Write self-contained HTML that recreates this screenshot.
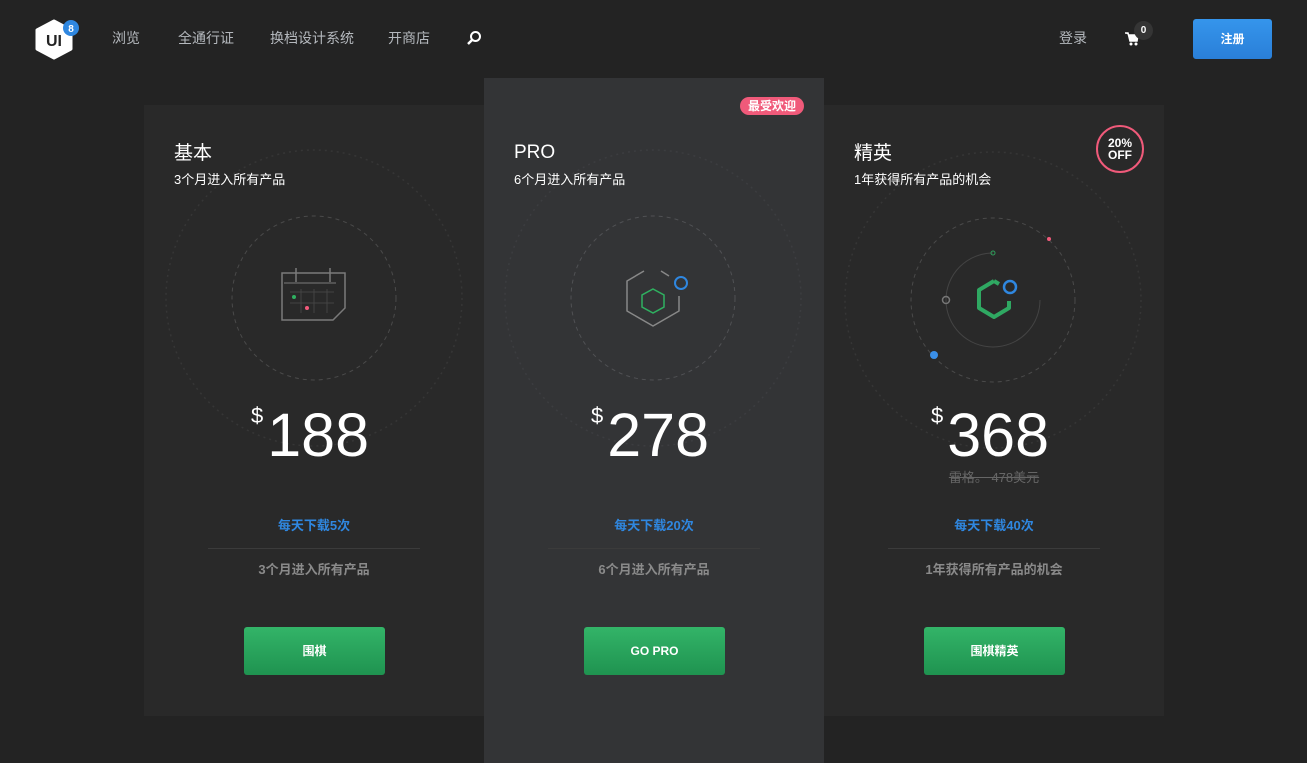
<!DOCTYPE html>
<html><head><meta charset="utf-8"><style>
*{margin:0;padding:0;box-sizing:border-box}
body{width:1307px;height:763px;background:#232323;font-family:"Liberation Sans","Noto Sans CJK SC",sans-serif;position:relative;overflow:hidden;color:#fff}
.nav{position:absolute;top:28px;font-size:14px;color:#b4b8bd}
.card{position:absolute;width:340px;background:#292929}
.abs{position:absolute}
.t1{position:absolute;left:30px;top:33px;font-size:19px;color:#fff}
.t2{position:absolute;left:30px;top:64px;font-size:13px;color:#fff}
.price{position:absolute;left:0;width:340px;padding-right:8px;text-align:center;font-size:61px;line-height:61px;color:#fff;font-family:"Liberation Sans",sans-serif}
.price sup{font-size:22px;line-height:22px;vertical-align:top;position:relative;top:0px;margin-right:4px}
.dl{position:absolute;left:0;width:340px;text-align:center;font-size:13px;font-weight:bold;color:#2f87e0}
.hr{position:absolute;left:64px;width:212px;height:1px;background:#3b3b3b}
.desc{position:absolute;left:0;width:340px;text-align:center;font-size:13px;font-weight:bold;color:#8a8a8a}
.btn{position:absolute;left:100px;width:141px;height:48px;border-radius:3px;background:linear-gradient(#33b468,#1f9350);text-align:center;line-height:48px;font-size:12px;font-weight:bold;color:#fff}
</style></head><body>
<svg class="abs" style="left:34px;top:18px" width="46" height="42" viewBox="0 0 46 42">
<polygon points="20,3 37,12 37,31 20,40 3,31 3,12" fill="#fff" stroke="#fff" stroke-width="3" stroke-linejoin="round"/>
<text x="20" y="28" text-anchor="middle" font-family="Liberation Sans" font-weight="bold" font-size="16" fill="#232323">UI</text>
<circle cx="37" cy="10" r="8" fill="#2f87e0"/>
<text x="37" y="14" text-anchor="middle" font-family="Liberation Sans" font-weight="bold" font-size="10" fill="#fff">8</text>
</svg>
<div class="nav" style="left:112px">浏览</div>
<div class="nav" style="left:178px">全通行证</div>
<div class="nav" style="left:270px">换档设计系统</div>
<div class="nav" style="left:388px">开商店</div>
<svg class="abs" style="left:466px;top:30px" width="16" height="16" viewBox="0 0 16 16"><circle cx="9.5" cy="6.5" r="4.5" stroke="#fff" stroke-width="2" fill="none"/><line x1="6" y1="10" x2="2" y2="14" stroke="#fff" stroke-width="2.5"/></svg>
<div class="nav" style="left:1059px">登录</div>
<svg class="abs" style="left:1124px;top:31px" width="16" height="16" viewBox="0 0 16 16"><path d="M1 2h3l2 8h7l1-6H5" fill="#fff" stroke="#fff" stroke-width="1.5"/><circle cx="7" cy="13" r="1.5" fill="#fff"/><circle cx="12" cy="13" r="1.5" fill="#fff"/></svg>
<div class="abs" style="left:1134px;top:21px;width:19px;height:19px;border-radius:50%;background:#353535;font-size:10px;font-weight:bold;text-align:center;line-height:19px">0</div>
<div class="abs" style="left:1193px;top:19px;width:79px;height:40px;border-radius:3px;background:linear-gradient(#3595ec,#2a7fd8);font-size:12px;font-weight:bold;text-align:center;line-height:40px">注册</div>

<!-- left -->
<div class="card" style="left:144px;top:105px;height:611px">
<svg class="abs" style="left:0;top:0" width="340" height="360"><circle cx="170" cy="193" r="148" fill="none" stroke="#363636" stroke-width="1.5" stroke-dasharray="2 4"/><circle cx="170" cy="193" r="82" fill="none" stroke="#4a4a4a" stroke-dasharray="4 4"/>
<g stroke="#7a7a7a" stroke-width="1.5" fill="none"><path d="M138 178V168h63v35l-12 12h-51V175"/><line x1="140" y1="178" x2="192" y2="178" stroke-width="1"/><line x1="152" y1="163" x2="152" y2="177"/><line x1="186" y1="163" x2="186" y2="177"/></g>
<g stroke="#444" stroke-width="1"><line x1="146" y1="187" x2="190" y2="187"/><line x1="146" y1="198" x2="190" y2="198"/><line x1="157" y1="184" x2="157" y2="208"/><line x1="170" y1="184" x2="170" y2="208"/><line x1="183" y1="184" x2="183" y2="208"/></g>
<circle cx="150" cy="192" r="2" fill="#2fb060"/><circle cx="163" cy="203" r="2" fill="#f25a7b"/></svg>
<div class="t1">基本</div><div class="t2">3个月进入所有产品</div>
<div class="price" style="top:300px"><sup>$</sup>188</div>
<div class="dl" style="top:410px">每天下载5次</div><div class="hr" style="top:443px"></div>
<div class="desc" style="top:454px">3个月进入所有产品</div>
<div class="btn" style="top:522px">围棋</div>
</div>
<!-- middle -->
<div class="card" style="left:484px;top:78px;height:685px;background:#333436">
<div class="abs" style="left:256px;top:19px;width:64px;height:18px;border-radius:9px;background:#f05a7a;font-size:12px;font-weight:bold;text-align:center;line-height:18px">最受欢迎</div>
<svg class="abs" style="left:0;top:27px" width="340" height="360"><circle cx="169" cy="193" r="148" fill="none" stroke="#3c3d40" stroke-width="1.5" stroke-dasharray="2 4"/><circle cx="169" cy="193" r="82" fill="none" stroke="#505154" stroke-dasharray="4 4"/>
<path d="M160 166l-17 10v30l26 15 26-15v-15M185 171l-8-5" stroke="#888" stroke-width="1.5" fill="none" stroke-linejoin="round"/>
<polygon points="169,184 180,190 180,202 169,208 158,202 158,190" fill="none" stroke="#2fb060" stroke-width="1.5"/>
<circle cx="197" cy="178" r="6" fill="none" stroke="#2f87e0" stroke-width="2"/></svg>
<div class="t1" style="top:64px">PRO</div><div class="t2" style="top:91px">6个月进入所有产品</div>
<div class="price" style="top:327px"><sup>$</sup>278</div>
<div class="dl" style="top:437px">每天下载20次</div><div class="hr" style="top:470px"></div>
<div class="desc" style="top:481px">6个月进入所有产品</div>
<div class="btn" style="top:549px">GO PRO</div>
</div>
<!-- right -->
<div class="card" style="left:824px;top:105px;height:611px">
<div class="abs" style="left:272px;top:20px;width:48px;height:48px;border-radius:50%;border:2.5px solid #f05a7a;text-align:center;font-size:12px;font-weight:bold;line-height:12px;padding-top:10px">20%<br>OFF</div>
<svg class="abs" style="left:0;top:0" width="340" height="360"><circle cx="169" cy="195" r="148" fill="none" stroke="#363636" stroke-width="1.5" stroke-dasharray="2 4"/><circle cx="169" cy="195" r="82" fill="none" stroke="#4a4a4a" stroke-dasharray="4 4"/>
<path d="M169 148a47 47 0 1 0 47 47" fill="none" stroke="#444" stroke-width="1"/>
<circle cx="169" cy="148" r="2" fill="none" stroke="#2f9d5a"/>
<circle cx="122" cy="195" r="3.5" fill="none" stroke="#777" stroke-width="1.5"/>
<circle cx="110" cy="250" r="4" fill="#3a8fe8"/><circle cx="225" cy="134" r="2" fill="#f05a7a"/>
<path d="M170 176l-15 9v18l15 9 15-9v-7M170 176l5 3" stroke="#2fa862" stroke-width="4" fill="none" stroke-linejoin="round"/>
<circle cx="186" cy="182" r="6" fill="none" stroke="#2f87e0" stroke-width="2.5"/></svg>
<div class="t1">精英</div><div class="t2">1年获得所有产品的机会</div>
<div class="price" style="top:300px"><sup>$</sup>368</div>
<div class="abs" style="left:0;width:340px;top:362px;text-align:center;font-size:13px;color:#666;text-decoration:line-through">雷格。 478美元</div>
<div class="dl" style="top:410px">每天下载40次</div><div class="hr" style="top:443px"></div>
<div class="desc" style="top:454px">1年获得所有产品的机会</div>
<div class="btn" style="top:522px">围棋精英</div>
</div>
</body></html>
